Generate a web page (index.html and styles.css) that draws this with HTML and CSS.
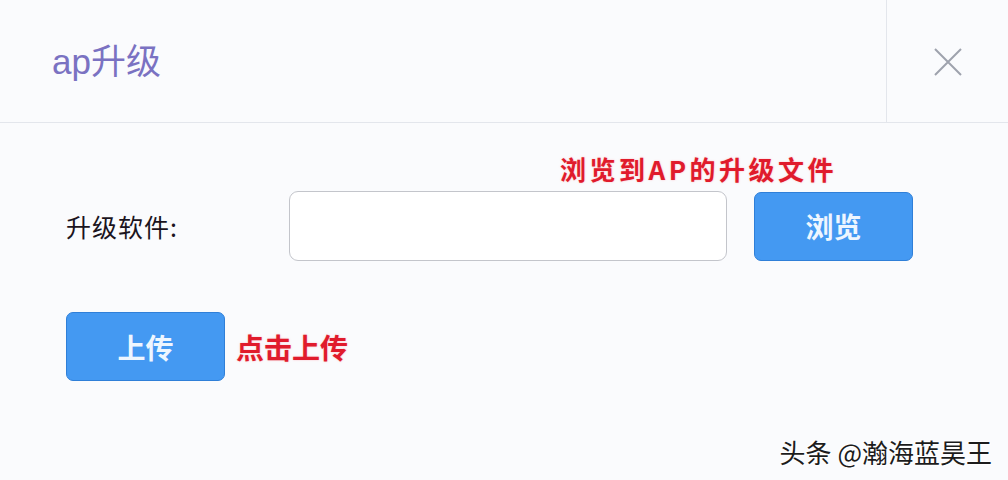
FILE: index.html
```html
<!DOCTYPE html>
<html>
<head>
<meta charset="utf-8">
<link rel="stylesheet" href="styles.css">
</head>
<body>
<div class="dialog">
  <div class="header">
    <div class="title">ap升级</div>
    <div class="close">
      <svg width="32" height="32" viewBox="0 0 32 32"><path d="M3 3 L29 29 M29 3 L3 29" stroke="#9ea2ad" stroke-width="2" fill="none"/></svg>
    </div>
  </div>
  <div class="body">
    <div class="note note-browse">浏览到AP的升级文件</div>
    <div class="row">
      <div class="label">升级软件:</div>
      <div class="input"></div>
      <div class="btn btn-browse">浏览</div>
    </div>
    <div class="row row-upload">
      <div class="btn btn-upload">上传</div>
      <div class="note note-upload">点击上传</div>
    </div>
  </div>
  <div class="watermark">头条 @瀚海蓝昊王</div>
</div>
</body>
</html>
```
FILE: styles.css
```css
html, body { margin: 0; padding: 0; }
body {
  width: 1008px; height: 480px; overflow: hidden;
  background: #fafbfd;
  font-family: "Noto Sans CJK SC", "Liberation Sans", sans-serif;
}
.dialog { position: relative; width: 1008px; height: 480px; }
.header {
  display: flex; height: 122px;
  border-bottom: 1px solid #e3e6ec;
}
.title {
  flex: 1; padding-left: 52px;
  font-size: 35px; line-height: 124px; color: #7a72c2;
  font-family: "Liberation Sans", "Noto Sans CJK SC", sans-serif;
}
.close {
  width: 121px; border-left: 1px solid #e3e6ec;
  display: flex; align-items: center; justify-content: center;
  padding-top: 2px;
}
.body { padding-left: 66px; padding-top: 26px; }
.note {
  color: #e01b2c; font-weight: 700;
  text-shadow: 0 0 2px rgba(255,160,170,0.7);
}
.note-browse { margin-left: 494px; font-size: 26px; line-height: 40px; letter-spacing: 3.5px; }
.row { display: flex; align-items: center; margin-top: 2px; }
.label { width: 223px; font-size: 25px; letter-spacing: 1px; color: #1a1420; }
.input {
  width: 436px; height: 68px;
  border: 1px solid #c3c5cb; border-radius: 9px; background: #fff;
}
.btn {
  width: 159px; height: 69px; box-sizing: border-box;
  background: #4499f2; border: 1px solid #2f7fd8; border-radius: 7px;
  color: #eef6ff; font-size: 28px; font-weight: 700;
  display: flex; align-items: center; justify-content: center;
}
.btn-browse { margin-left: 27px; }
.row-upload { margin-top: 51px; }
.note-upload { margin-left: 11px; font-size: 28px; }
.watermark {
  position: absolute; right: 16px; bottom: 10px;
  font-size: 26px; color: #1c1c1c;
  text-shadow: 1px 1px 0 #fff, -1px -1px 0 #fff;
}
```
